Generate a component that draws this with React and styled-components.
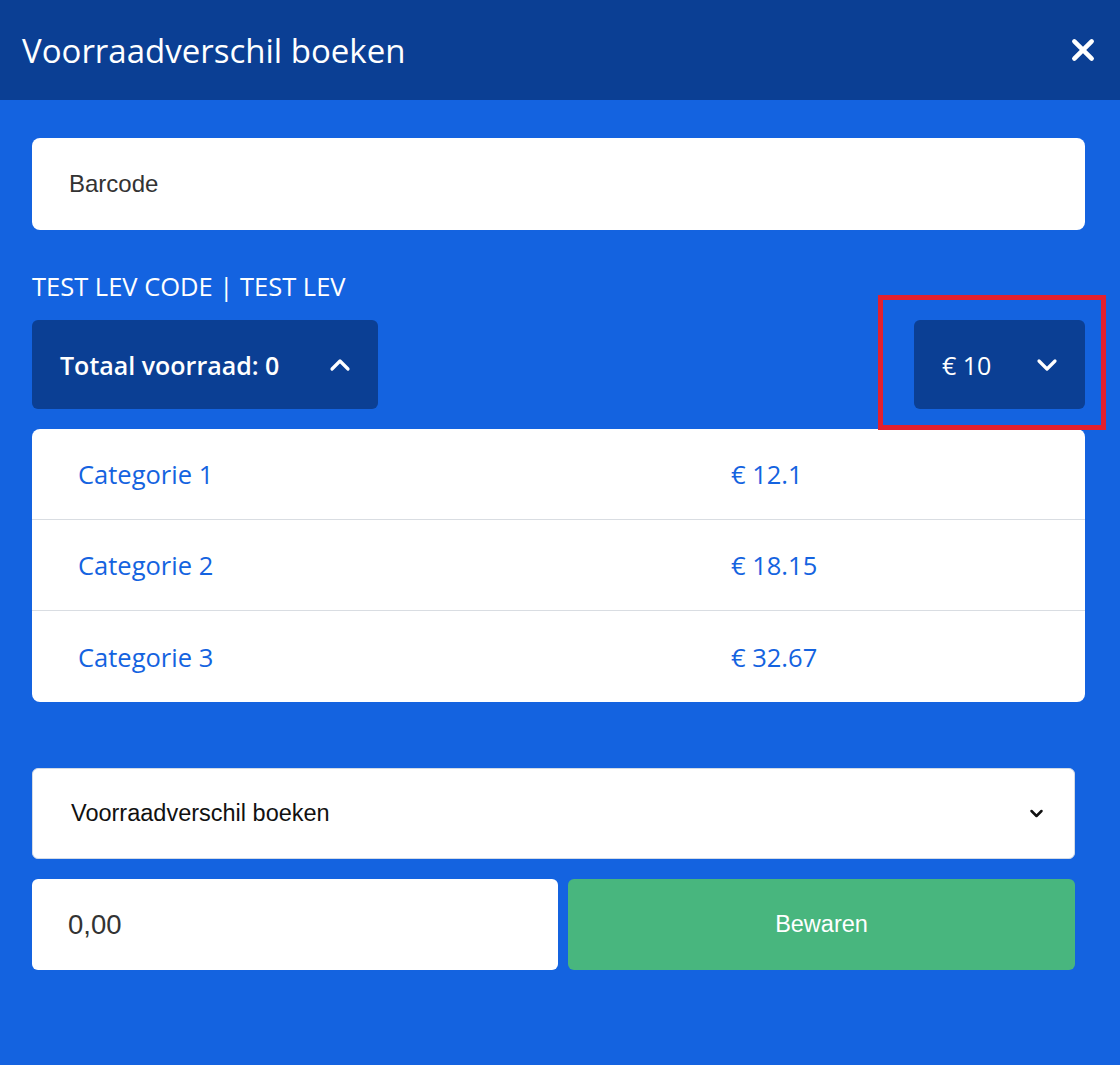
import React from 'react';
import styled, { createGlobalStyle } from 'styled-components';

const GlobalStyle = createGlobalStyle`
  html, body {
    margin: 0;
    padding: 0;
    background: #1463e0;
  }
  * { box-sizing: border-box; }
`;

const Modal = styled.div`
  width: 1120px;
  min-height: 1065px;
  background: #1463e0;
  font-family: 'Open Sans', sans-serif;
`;

const Header = styled.header`
  height: 100px;
  background: #0b3f94;
  display: flex;
  align-items: center;
  justify-content: space-between;
  padding: 0 24px 0 22px;
  color: #fff;
`;

const Title = styled.h1`
  margin: 0;
  font-size: 33px;
  font-weight: 400;
`;

const Close = styled.button`
  border: 0;
  background: none;
  padding: 0;
  color: #fff;
  display: flex;
  cursor: pointer;
`;

const Body = styled.div`
  padding: 38px 35px 0 32px;
`;

const Field = styled.div`
  height: 92px;
  background: #fff;
  border-radius: 8px;
  display: flex;
  align-items: center;
  padding: 0 37px;
  font-family: 'Liberation Sans', Arial, sans-serif;
  font-size: 24px;
  color: #333;
`;

const Supplier = styled.div`
  margin-top: 41px;
  color: #fff;
  font-size: 25.5px;
  line-height: 30px;
`;

const Toolbar = styled.div`
  margin-top: 19px;
  display: flex;
  justify-content: space-between;
`;

const Toggle = styled.button`
  position: relative;
  height: 89px;
  width: ${({ $w }) => $w}px;
  border: 0;
  border-radius: 6px;
  background: #0b3f94;
  color: #fff;
  font-family: 'Open Sans', sans-serif;
  font-size: 25px;
  font-weight: ${({ $bold }) => ($bold ? 600 : 500)};
  display: flex;
  align-items: center;
  justify-content: space-between;
  padding: 0 26px 0 28px;
  cursor: pointer;

  ${({ $marked }) =>
    $marked &&
    `&::after {
      content: '';
      position: absolute;
      top: -25px;
      left: -36px;
      right: -21px;
      bottom: -21px;
      border: 5px solid #e3202e;
      pointer-events: none;
    }`}
`;

const List = styled.div`
  margin-top: 20px;
  background: #fff;
  border-radius: 8px;
  overflow: hidden;
`;

const Row = styled.div`
  height: 91px;
  display: grid;
  grid-template-columns: 653px 1fr;
  align-items: center;
  padding-left: 46px;
  border-bottom: ${({ $last }) => ($last ? 'none' : '1.5px solid #d9dde2')};
  color: #1463e0;
  font-size: 25.5px;
`;

const Form = styled.div`
  margin-top: 66px;
  margin-right: 10px;
  display: flex;
  flex-direction: column;
  gap: 20px;
`;

const Select = styled.div`
  height: 91px;
  background: #fff;
  border: 1px solid #d3dbe6;
  border-radius: 6px;
  display: flex;
  align-items: center;
  justify-content: space-between;
  padding: 0 30px 0 38px;
  font-family: 'Liberation Sans', Arial, sans-serif;
  font-size: 23.5px;
  color: #111;
`;

const Split = styled.div`
  display: grid;
  grid-template-columns: 526px 1fr;
  gap: 10px;
`;

const Amount = styled.div`
  height: 91px;
  background: #fff;
  border-radius: 6px;
  display: flex;
  align-items: center;
  padding: 0 36px;
  font-family: 'Liberation Sans', Arial, sans-serif;
  font-size: 27.5px;
  color: #333;
`;

const Save = styled.button`
  height: 91px;
  border: 0;
  border-radius: 6px;
  background: #48b67e;
  color: #fff;
  font-family: 'Liberation Sans', Arial, sans-serif;
  font-size: 23.5px;
  cursor: pointer;
`;

const Chevron = ({ up, size = 24, stroke = 3.2 }) => (
  <svg width={size} height={size} viewBox="0 0 24 24" fill="none" stroke="currentColor"
    strokeWidth={stroke} strokeLinecap="round" strokeLinejoin="round">
    <path d={up ? 'M4 16l8-8 8 8' : 'M4 8l8 8 8-8'} />
  </svg>
);

const categories = [
  { name: 'Categorie 1', price: '€ 12.1' },
  { name: 'Categorie 2', price: '€ 18.15' },
  { name: 'Categorie 3', price: '€ 32.67' },
];

export default function App() {
  return (
    <Modal>
      <GlobalStyle />
      <Header>
        <Title>Voorraadverschil boeken</Title>
        <Close aria-label="Sluiten">
          <svg width="26" height="26" viewBox="0 0 24 24" stroke="currentColor" strokeWidth="4.2" strokeLinecap="round">
            <path d="M4 4l16 16M20 4L4 20" />
          </svg>
        </Close>
      </Header>
      <Body>
        <Field>Barcode</Field>
        <Supplier>TEST LEV CODE | TEST LEV</Supplier>
        <Toolbar>
          <Toggle $w={346} $bold>
            Totaal voorraad: 0
            <Chevron up />
          </Toggle>
          <Toggle $w={171} $marked>
            € 10
            <Chevron />
          </Toggle>
        </Toolbar>
        <List>
          {categories.map((c, i) => (
            <Row key={c.name} $last={i === categories.length - 1}>
              <span>{c.name}</span>
              <span>{c.price}</span>
            </Row>
          ))}
        </List>
        <Form>
          <Select>
            Voorraadverschil boeken
            <Chevron size={15} stroke={4} />
          </Select>
          <Split>
            <Amount>0,00</Amount>
            <Save>Bewaren</Save>
          </Split>
        </Form>
      </Body>
    </Modal>
  );
}
